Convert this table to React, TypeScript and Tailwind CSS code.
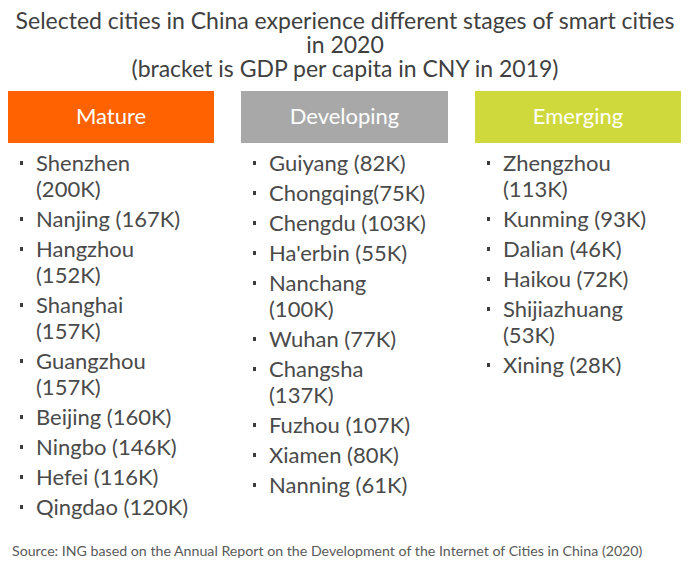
import React from "react";

type Col = { title: string; bg: string; items: string[][] };

const cols: Col[] = [
  {
    title: "Mature",
    bg: "bg-[#ff6200]",
    items: [
      ["Shenzhen", "(200K)"],
      ["Nanjing (167K)"],
      ["Hangzhou", "(152K)"],
      ["Shanghai", "(157K)"],
      ["Guangzhou", "(157K)"],
      ["Beijing (160K)"],
      ["Ningbo (146K)"],
      ["Hefei (116K)"],
      ["Qingdao (120K)"],
    ],
  },
  {
    title: "Developing",
    bg: "bg-[#a8a8a8]",
    items: [
      ["Guiyang (82K)"],
      ["Chongqing(75K)"],
      ["Chengdu (103K)"],
      ["Ha'erbin (55K)"],
      ["Nanchang", "(100K)"],
      ["Wuhan (77K)"],
      ["Changsha", "(137K)"],
      ["Fuzhou (107K)"],
      ["Xiamen (80K)"],
      ["Nanning (61K)"],
    ],
  },
  {
    title: "Emerging",
    bg: "bg-[#d0d93c]",
    items: [
      ["Zhengzhou", "(113K)"],
      ["Kunming (93K)"],
      ["Dalian (46K)"],
      ["Haikou (72K)"],
      ["Shijiazhuang", "(53K)"],
      ["Xining (28K)"],
    ],
  },
];

export default function App() {
  return (
    <div className="w-[690px] h-[570px] bg-white text-[#4a4a4a] font-['Lato',sans-serif] flex flex-col">
      <div className="pt-[8px] text-center text-[23px] leading-[24px] text-[#404040]">
        <div>Selected cities in China experience different stages of smart cities</div>
        <div>in 2020</div>
        <div>(bracket is GDP per capita in CNY in 2019)</div>
      </div>
      <div className="mt-[11px] ml-[8px] grid grid-cols-[206px_207px_206px] gap-x-[27px]">
        {cols.map((c) => (
          <div key={c.title} className="flex flex-col">
            <div
              className={`${c.bg} h-[52px] pb-[4px] flex items-center justify-center text-white text-[22px]`}
            >
              {c.title}
            </div>
            <div className="mt-[7px] flex flex-col gap-[4px]">
              {c.items.map((lines, i) => (
                <div key={i} className="flex">
                  <div className="w-[28px] shrink-0 pl-[12px] pt-[11px]">
                    <div className="w-[3px] h-[4px] bg-[#3c3c3c]" />
                  </div>
                  <div className="text-[22px] leading-[26px] whitespace-nowrap">
                    {lines.map((l, j) => (
                      <div key={j}>{l}</div>
                    ))}
                  </div>
                </div>
              ))}
            </div>
          </div>
        ))}
      </div>
      <div className="mt-auto mb-[10px] pl-[12px] text-[14.2px] leading-[18px] text-[#5a5a5a]">
        Source: ING based on the Annual Report on the Development of the Internet of Cities in China (2020)
      </div>
    </div>
  );
}
